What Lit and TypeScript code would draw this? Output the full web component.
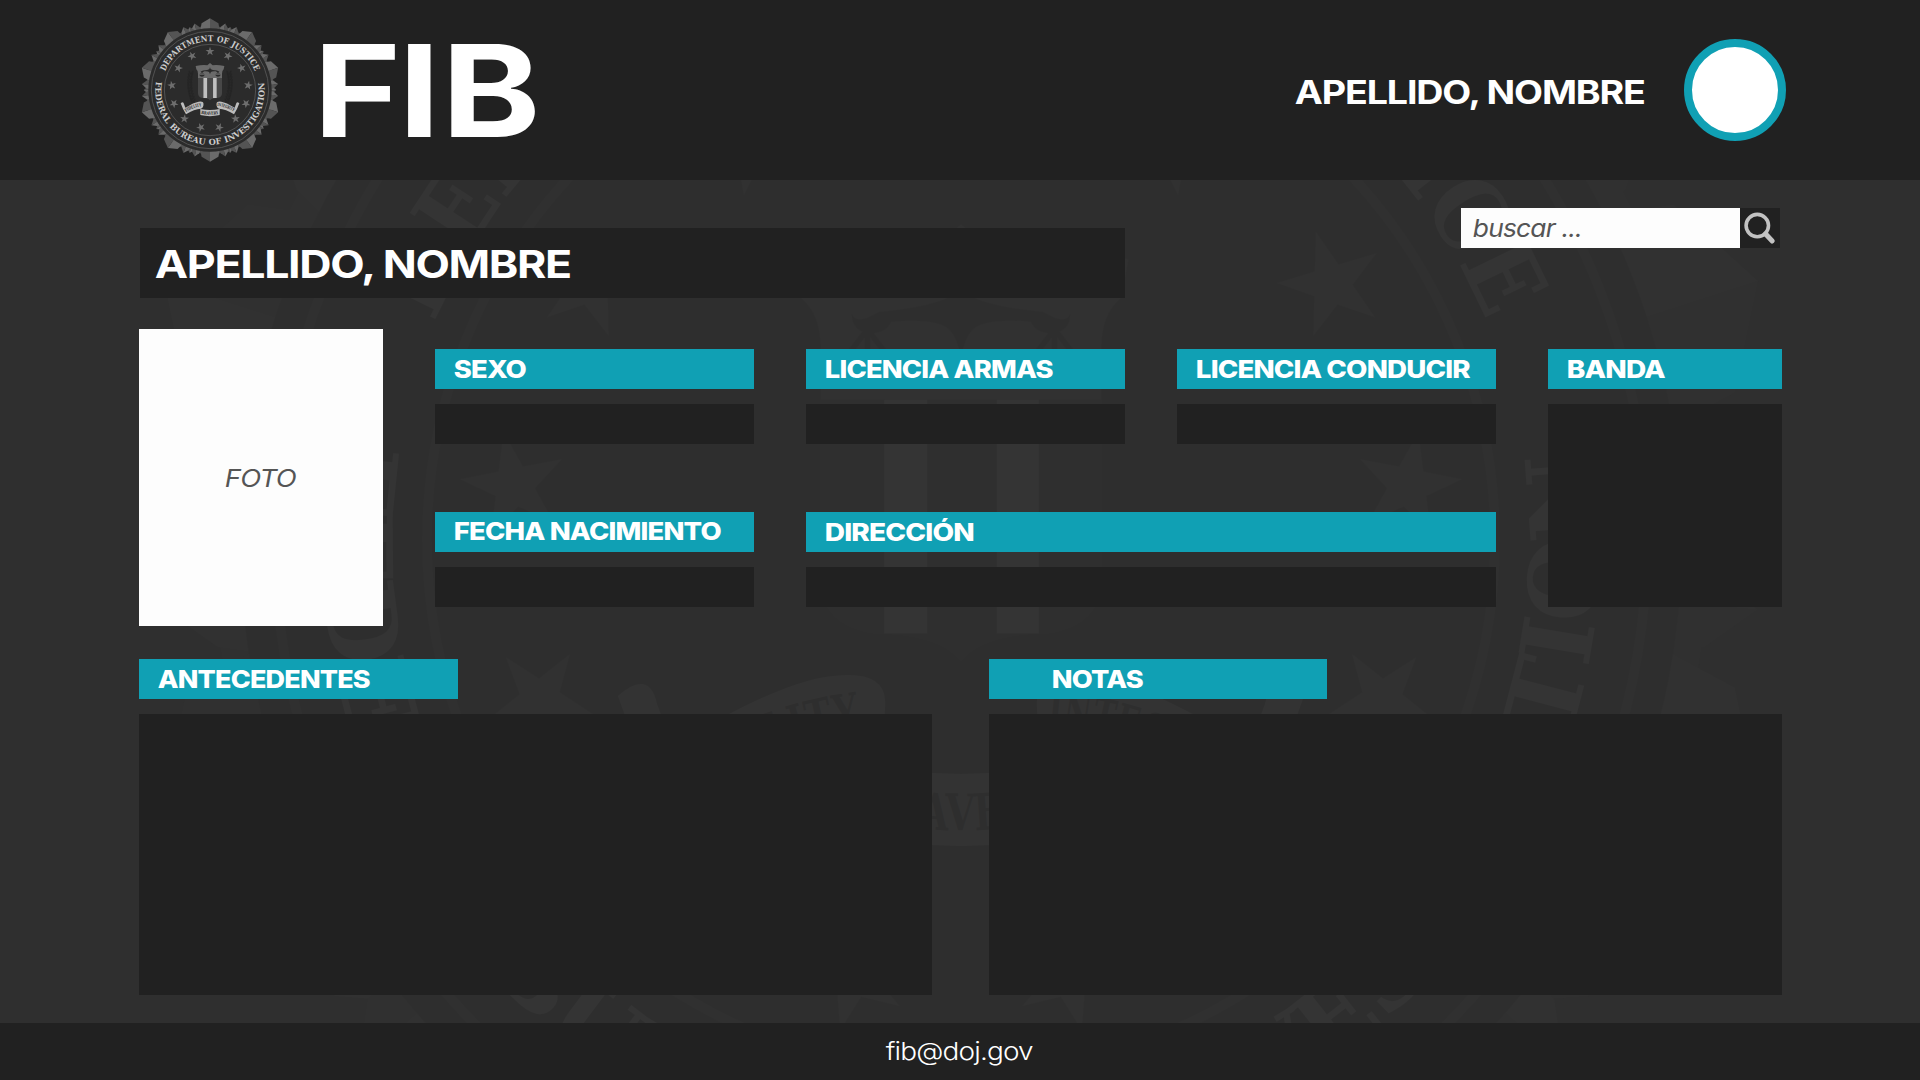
import { LitElement, html, svg, css } from "lit";
import { customElement, property } from "lit/decorators.js";

const rad = (deg: number) => (deg * Math.PI) / 180;
const polar = (deg: number, r: number) =>
  `${(r * Math.sin(rad(deg))).toFixed(2)},${(-r * Math.cos(rad(deg))).toFixed(2)}`;

/** A two-tone crystal spike on the rim of the seal. */
const spike = (deg: number, r: number, half: number) => svg`
  <polygon class="facet-a" points="${polar(deg - half, 184)} ${polar(deg - half * 0.8, r * 0.94)} ${polar(deg, r)} ${polar(deg, 184)}"></polygon>
  <polygon class="facet-b" points="${polar(deg + half, 184)} ${polar(deg + half * 0.8, r * 0.94)} ${polar(deg, r)} ${polar(deg, 184)}"></polygon>`;

const star = (deg: number) => {
  const pts: string[] = [];
  for (let i = 0; i < 10; i++) {
    const r = i % 2 ? 5.4 : 14;
    pts.push(polar(i * 36, r));
  }
  return svg`<polygon class="star" points=${pts.join(" ")}
    transform="rotate(${deg}) translate(0,-115.5)"></polygon>`;
};

const leaves = (side: number) =>
  Array.from({ length: 11 }, (_, i) => {
    const v = -52 + i * 8.4;
    const u = side * (61 - Math.pow((i - 4) / 7, 2) * 13);
    return svg`
      <ellipse class="leaf" cx=${u - 4} cy=${v} rx="2.6" ry="7" transform="rotate(-24 ${u - 4} ${v})"></ellipse>
      <ellipse class="leaf" cx=${u + 4} cy=${v} rx="2.6" ry="7" transform="rotate(24 ${u + 4} ${v})"></ellipse>`;
  });

@customElement("fib-seal")
export class FibSeal extends LitElement {
  static styles = css`
    :host { display: block; }
    svg { display: block; width: 100%; height: 100%; overflow: visible; }
    .facet-a { fill: #6b6b6b; }
    .facet-b { fill: #545454; }
    .rim { fill: #4c4c4c; }
    .disc { fill: #2b2b2b; }
    .ring { fill: none; stroke: #5c5c5c; stroke-width: 2.4; }
    .star { fill: #6e6e6e; }
    .leaf { fill: #252525; }
    .legend { font: bold 25px "DejaVu Serif", serif; fill: #cccccc; word-spacing: 2px; }
    .chief { fill: #6a6a6a; }
    .body { fill: #474747; }
    .stripe { fill: #c0c0c0; }
    .scales { fill: #2b2b2b; }
    .wire { fill: none; stroke: #2b2b2b; stroke-width: 1.4; }
    .ribbon { fill: #bdbdbd; }
    .motto { font: bold 13px "DejaVu Serif", serif; fill: #262626; }
  `;

  render() {
    const big = Array.from({ length: 10 }, (_, i) => i * 36);
    return html`
      <svg viewBox="-216 -216 432 432" aria-label="Seal">
        <defs>
          <path id="arc-top" d="M-146 0 A146 146 0 0 1 146 0"></path>
          <path id="arc-bottom" d="M-161.5 -28 A164 164 0 1 0 161.5 -28"></path>
          <path id="fold-left" d="M-72 66 Q-48 50 -22 48"></path>
          <path id="fold-mid" d="M-27 71 Q0 78 27 71"></path>
          <path id="fold-right" d="M22 48 Q48 50 72 66"></path>
        </defs>
        <circle class="rim" r="192"></circle>
        ${big.map(
          (d) => svg`${spike(d + 18, 199, 4)}${spike(d + 13, 205, 4)}${spike(d - 13, 205, 4)}${spike(d, 215, 9)}`
        )}
        <circle class="disc" r="185"></circle>
        <circle class="ring" r="176"></circle>
        <circle class="ring" r="137"></circle>
        <text class="legend"><textPath href="#arc-top" startOffset="57" textLength="344" lengthAdjust="spacingAndGlyphs">DEPARTMENT OF JUSTICE</textPath></text>
        <text class="legend"><textPath href="#arc-bottom" startOffset="3" textLength="564" lengthAdjust="spacingAndGlyphs">FEDERAL BUREAU OF INVESTIGATION</textPath></text>
        ${Array.from({ length: 13 }, (_, i) => star((i * 360) / 13))}
        ${leaves(-1)}${leaves(1)}
        <path class="body" d="M-36 -38 H36 V10 Q36 22 22 24 Q6 24 0 31 Q-6 24 -22 24 Q-36 22 -36 10Z"></path>
        <path class="stripe" d="M-19.7 -36H-8.7V24H-19.7ZM9.2 -36H20V24H9.2Z"></path>
        <path class="chief" d="M-43 -72 Q-22 -76 -8 -74 L0 -81 L8 -74 Q22 -76 43 -72 L41 -62 Q36 -58 36 -49 V-36 H-36 V-49 Q-36 -58 -41 -62Z"></path>
        <path class="scales" d="M-21 -58.5 Q-6 -60 -2 -63 L0 -68 L2 -63 Q6 -60 21 -58.5 Q27 -55 28 -58 Q28 -54 24 -53 Q19 -53 18 -56 Q6 -57 3 -54 Q1 -52 0 -47 Q-1 -52 -3 -54 Q-6 -57 -18 -56 Q-19 -53 -24 -53 Q-28 -54 -28 -58 Q-27 -55 -21 -58.5Z"></path>
        <path class="wire" d="M-24 -54 L-31 -45 M-24 -54 L-17 -45 M24 -54 L31 -45 M24 -54 L17 -45 M-24 -54V-45 M24 -54V-45"></path>
        <path class="scales" d="M-32 -45H-16Q-18 -40 -24 -40Q-30 -40 -32 -45ZM32 -45H16Q18 -40 24 -40Q30 -40 32 -45Z"></path>
        <path class="ribbon" d="M-29 57 Q0 63 29 57 V75 Q0 82 -29 75Z"></path>
        <path class="ribbon" d="M-88 40 Q-80 33 -78 42 L-74 53 Q-48 37 -34 35 Q-20 33 -19.5 41 Q-19 53 -27 56 Q-47 57 -72 73 Q-81 60 -88 40Z"></path>
        <path class="ribbon" d="M88 40 Q80 33 78 42 L74 53 Q48 37 34 35 Q20 33 19.5 41 Q19 53 27 56 Q47 57 72 73 Q81 60 88 40Z"></path>
        <text class="motto"><textPath href="#fold-left" textLength="50" lengthAdjust="spacingAndGlyphs">FIDELITY</textPath></text>
        <text class="motto"><textPath href="#fold-mid" textLength="53" lengthAdjust="spacingAndGlyphs">BRAVERY</textPath></text>
        <text class="motto"><textPath href="#fold-right" textLength="51" lengthAdjust="spacingAndGlyphs">INTEGRITY</textPath></text>
      </svg>`;
  }
}

/** One line of text fitted to a fixed width on a given baseline. */
@customElement("fit-text")
export class FitText extends LitElement {
  @property() text = "";
  @property() variant = "label";
  @property({ type: Number }) width = 100;
  @property({ type: Number }) height = 40;
  @property({ type: Number }) base = 28.7;

  static styles = css`
    :host { display: block; flex: none; }
    svg { display: block; overflow: visible; }
    text { font-family: Inter, "Open Sans", sans-serif; fill: #fff; letter-spacing: -0.03em; }
    .label { font-size: 24.4px; font-weight: 800; }
    .user { font-size: 32.4px; font-weight: 700; }
    .title { font-size: 38px; font-weight: 700; }
    .hint { font-size: 24.4px; font-style: italic; font-weight: 400; fill: #555; font-feature-settings: "cv11"; }
    .mail { font-size: 24.4px; font-weight: 350; font-feature-settings: "cv11"; }
  `;

  render() {
    return html`<svg width=${this.width} height=${this.height}>
      <text class=${this.variant} x="-1.2" y=${this.base} textLength=${this.width + 1} lengthAdjust="spacingAndGlyphs">${this.text}</text>
    </svg>`;
  }
}

interface Field { name: string; width: number; base: number; cls: string; }

const FIELDS: Field[] = [
  { name: "SEXO", width: 71, base: 28.7, cls: "" },
  { name: "LICENCIA ARMAS", width: 227, base: 28.7, cls: "" },
  { name: "LICENCIA CONDUCIR", width: 273, base: 28.7, cls: "" },
  { name: "BANDA", width: 97, base: 28.7, cls: "tall" },
  { name: "FECHA NACIMIENTO", width: 266, base: 27.6, cls: "" },
  { name: "DIRECCIÓN", width: 148, base: 28.9, cls: "wide" },
];

@customElement("app-root")
export class AppRoot extends LitElement {
  static styles = css`
    :host { display: block; font-family: Inter, "Open Sans", sans-serif; }
    * { box-sizing: border-box; }
    .page { width: 1920px; height: 1080px; display: flex; flex-direction: column; background: #2f2f2f; overflow: hidden; }
    .header { height: 180px; flex: none; background: #212121; display: flex; align-items: center; padding: 0 134px 0 138px; }
    .logo { width: 144px; height: 144px; flex: none; }
    .brand { display: block; margin-left: 42px; overflow: visible; flex: none; }
    .brand-text { font: 700 128px Inter, sans-serif; fill: #fff; }
    .user { margin-left: auto; }
    .avatar { width: 102px; height: 102px; border-radius: 50%; border: 8px solid #10a0b4; background: #fff; margin-left: 39px; flex: none; }
    .main { flex: 1; position: relative; overflow: hidden; }
    .watermark { position: absolute; left: 119px; top: -482px; width: 1684px; height: 1684px; opacity: 0.032; }
    .content { position: relative; padding: 28px 138px 0 139px; }
    .top { display: flex; justify-content: space-between; align-items: flex-start; padding: 0 2px 0 1px; }
    .title { margin-top: 20px; width: 985px; height: 70px; background: #212121; padding-left: 16px; }
    .search { display: flex; height: 40px; width: 319px; }
    .input { width: 279px; background: #fdfdfd; padding-left: 13px; }
    .find { width: 40px; background: #212121; }
    .find svg { display: block; }
    .record { display: flex; gap: 52px; margin-top: 31px; height: 297px; }
    .photo { width: 244px; background: #fdfdfd; display: flex; justify-content: center; flex: none; }
    .fields { display: grid; grid-template-columns: 319px 319px 319px 234px; grid-template-rows: 95px 95px; column-gap: 52px; row-gap: 68px; padding-top: 20px; }
    .field { display: flex; flex-direction: column; gap: 15px; }
    .tall { grid-column: 4; grid-row: 1 / span 2; }
    .wide { grid-column: 2 / span 2; }
    .tag { height: 40px; flex: none; background: #10a0b4; padding-left: 20px; }
    .value { flex: 1; background: #212121; }
    .notes { display: grid; grid-template-columns: 793px 793px; gap: 57px; margin-top: 33px; height: 336px; }
    .tag-a { width: 319px; padding-left: 19.5px; }
    .tag-b { width: 338px; padding-left: 64px; }
    .footer { height: 57px; flex: none; background: #212121; display: flex; justify-content: center; }
  `;

  render() {
    return html`
      <div class="page">
        <header class="header">
          <fib-seal class="logo"></fib-seal>
          <svg class="brand" width="212" height="93">
            <text class="brand-text" transform="scale(1.17,1)" x="-9.3 63.4 100.4" y="93">FIB</text>
          </svg>
          <fit-text class="user" variant="user" text="APELLIDO, NOMBRE" .width=${349} .height=${102} .base=${65}></fit-text>
          <div class="avatar"></div>
        </header>
        <main class="main">
          <fib-seal class="watermark"></fib-seal>
          <div class="content">
            <div class="top">
              <div class="title">
                <fit-text variant="title" text="APELLIDO, NOMBRE" .width=${415} .height=${70} .base=${50}></fit-text>
              </div>
              <div class="search">
                <div class="input">
                  <fit-text variant="hint" text="buscar ..." .width=${108} .base=${28.7}></fit-text>
                </div>
                <div class="find">
                  <svg width="40" height="40" viewBox="0 0 40 40" fill="none" stroke="#c2c2c2" stroke-linecap="round">
                    <circle cx="17.3" cy="17.6" r="11.2" stroke-width="3.6"></circle>
                    <path d="M25.4 25.8 L32.2 33" stroke-width="5"></path>
                  </svg>
                </div>
              </div>
            </div>
            <section class="record">
              <div class="photo">
                <fit-text variant="hint" text="FOTO" .width=${70} .height=${297} .base=${157.5}></fit-text>
              </div>
              <div class="fields">
                ${FIELDS.map(
                  (f) => html`<div class="field ${f.cls}">
                    <div class="tag"><fit-text .text=${f.name} .width=${f.width} .base=${f.base}></fit-text></div>
                    <div class="value"></div>
                  </div>`
                )}
              </div>
            </section>
            <section class="notes">
              <div class="field">
                <div class="tag tag-a"><fit-text text="ANTECEDENTES" .width=${211} .base=${29}></fit-text></div>
                <div class="value"></div>
              </div>
              <div class="field">
                <div class="tag tag-b"><fit-text text="NOTAS" .width=${90} .base=${29}></fit-text></div>
                <div class="value"></div>
              </div>
            </section>
          </div>
        </main>
        <footer class="footer">
          <fit-text variant="mail" text="fib@doj.gov" .width=${146} .height=${57} .base=${37}></fit-text>
        </footer>
      </div>`;
  }
}
